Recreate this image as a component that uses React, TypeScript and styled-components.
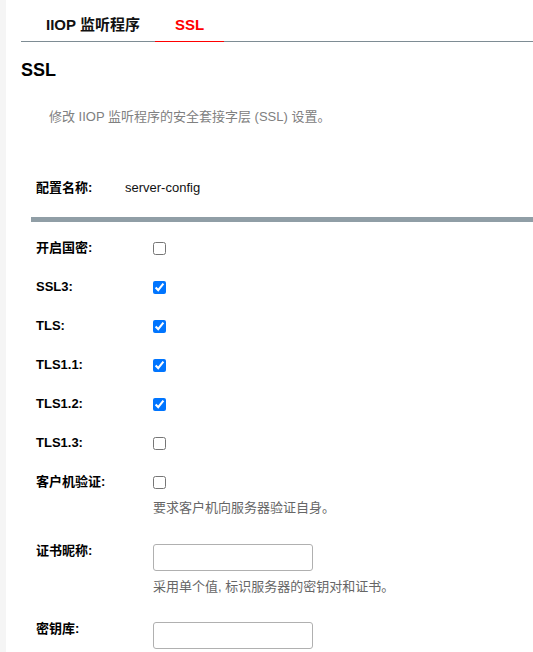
import React from 'react';
import styled, { createGlobalStyle } from 'styled-components';

const GlobalStyle = createGlobalStyle`
  html, body {
    margin: 0;
    padding: 0;
    background: #fff;
    font-family: "Liberation Sans", Arial, "Noto Sans CJK SC", sans-serif;
    color: #000;
  }
`;

// Styled
const Page = styled.div`
  display: flex;
  min-height: 652px;
`;

const SideStrip = styled.div`
  width: 6px;
  flex: none;
  background: #f5f5f5;
`;

const Main = styled.div`
  flex: 1;
  min-width: 0;
`;

const TabBar = styled.div`
  display: flex;
  margin-left: 15px;
  padding-left: 5px;
  border-bottom: 1px solid #7e8c94;
`;

const Tab = styled.div<{ $active?: boolean }>`
  padding: 17px 20px 8px;
  margin-bottom: -1px;
  font-size: 15px;
  line-height: 16px;
  font-weight: bold;
  color: ${p => (p.$active ? '#ff0000' : '#111')};
  border-bottom: 1px solid ${p => (p.$active ? '#ff0000' : 'transparent')};

  &:first-child {
    padding-right: 15px;
  }
`;

const Heading = styled.h2`
  margin: 17px 0 0 15px;
  font-size: 18px;
  line-height: 22px;
  font-weight: bold;
`;

const Description = styled.p`
  margin: 27px 0 0 43px;
  font-size: 13px;
  line-height: 18px;
  color: #808080;
`;

const ConfigRow = styled.div`
  display: grid;
  grid-template-columns: 89px 1fr;
  margin: 53px 0 0 30px;
  font-size: 13px;
  line-height: 18px;
`;

const ConfigLabel = styled.span`
  font-weight: bold;
`;

const ConfigValue = styled.span`
  color: #111;
`;

const Divider = styled.div`
  height: 5px;
  margin: 20px 0 7px 25px;
  background: #909ea6;
`;

const Form = styled.div`
  padding-left: 30px;
`;

const Field = styled.div<{ $pb?: number }>`
  display: grid;
  grid-template-columns: 117px 1fr;
  align-items: start;
  padding: 10px 0 ${p => p.$pb ?? 11}px;
  font-size: 13px;
  line-height: 18px;
`;

const Label = styled.label`
  font-weight: bold;
  color: #000;
`;

const Control = styled.div`
  display: flex;
  flex-direction: column;
  align-items: flex-start;
`;

const CheckLine = styled.div`
  height: 18px;
  display: flex;
  align-items: center;
`;

const Check = styled.input.attrs({ type: 'checkbox' })`
  width: 13px;
  height: 13px;
  margin: 0;
`;

const TextInput = styled.input.attrs({ type: 'text' })`
  box-sizing: border-box;
  width: 160px;
  height: 27px;
  margin: 2px 0 0;
  border: 1px solid #b0b0b0;
  border-radius: 3px;
  background: #fff;
  font: inherit;
`;

const Help = styled.div<{ $mt?: number }>`
  margin-top: ${p => p.$mt ?? 8}px;
  color: #666;
  font-size: 13px;
  line-height: 18px;
`;

const protocols = [
  { name: '开启国密:', checked: false },
  { name: 'SSL3:', checked: true },
  { name: 'TLS:', checked: true },
  { name: 'TLS1.1:', checked: true },
  { name: 'TLS1.2:', checked: true },
  { name: 'TLS1.3:', checked: false },
];

const App: React.FC = () => {
  return (
    <>
      <GlobalStyle />
      <Page>
        <SideStrip />
        <Main>
          <TabBar>
            <Tab>IIOP 监听程序</Tab>
            <Tab $active>SSL</Tab>
          </TabBar>

          <Heading>SSL</Heading>
          <Description>修改 IIOP 监听程序的安全套接字层 (SSL) 设置。</Description>

          <ConfigRow>
            <ConfigLabel>配置名称:</ConfigLabel>
            <ConfigValue>server-config</ConfigValue>
          </ConfigRow>

          <Divider />

          <Form>
            {protocols.map(p => (
              <Field key={p.name}>
                <Label>{p.name}</Label>
                <Control>
                  <CheckLine>
                    <Check defaultChecked={p.checked} />
                  </CheckLine>
                </Control>
              </Field>
            ))}

            <Field $pb={15}>
              <Label>客户机验证:</Label>
              <Control>
                <CheckLine>
                  <Check />
                </CheckLine>
                <Help>要求客户机向服务器验证自身。</Help>
              </Control>
            </Field>

            <Field $pb={14}>
              <Label>证书昵称:</Label>
              <Control>
                <TextInput />
                <Help $mt={7}>采用单个值, 标识服务器的密钥对和证书。</Help>
              </Control>
            </Field>

            <Field>
              <Label>密钥库:</Label>
              <Control>
                <TextInput />
              </Control>
            </Field>
          </Form>
        </Main>
      </Page>
    </>
  );
};

export default App;
